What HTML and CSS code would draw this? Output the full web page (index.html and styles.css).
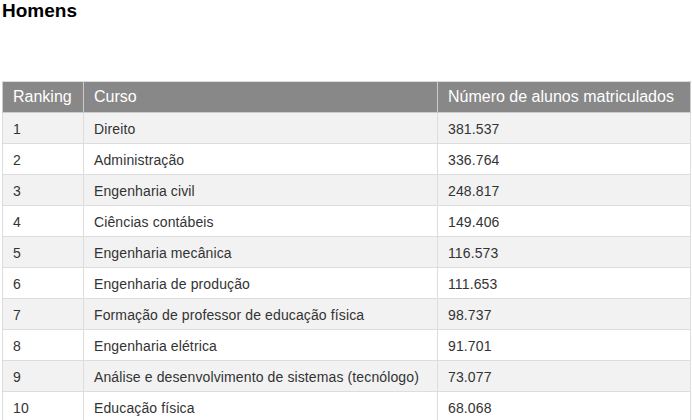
FILE: index.html
```html
<!DOCTYPE html>
<html lang="pt">
<head>
<meta charset="utf-8">
<link rel="stylesheet" href="styles.css">
</head>
<body>
<h2 class="title">Homens</h2>
<table class="rank">
  <colgroup><col class="c1"><col class="c2"><col class="c3"></colgroup>
  <thead>
    <tr><th>Ranking</th><th>Curso</th><th>Número de alunos matriculados</th></tr>
  </thead>
  <tbody>
    <tr><td>1</td><td>Direito</td><td>381.537</td></tr>
    <tr><td>2</td><td>Administração</td><td>336.764</td></tr>
    <tr><td>3</td><td>Engenharia civil</td><td>248.817</td></tr>
    <tr><td>4</td><td>Ciências contábeis</td><td>149.406</td></tr>
    <tr><td>5</td><td>Engenharia mecânica</td><td>116.573</td></tr>
    <tr><td>6</td><td>Engenharia de produção</td><td>111.653</td></tr>
    <tr><td>7</td><td>Formação de professor de educação física</td><td>98.737</td></tr>
    <tr><td>8</td><td>Engenharia elétrica</td><td>91.701</td></tr>
    <tr><td>9</td><td>Análise e desenvolvimento de sistemas (tecnólogo)</td><td>73.077</td></tr>
    <tr><td>10</td><td>Educação física</td><td>68.068</td></tr>
  </tbody>
</table>
</body>
</html>
```
FILE: styles.css
```css
html, body {
  margin: 0;
  padding: 0;
  background: #fff;
}
body {
  padding: 0 2px;
  font-family: "Liberation Sans", Arial, sans-serif;
  color: #333;
}
.title {
  margin: 0;
  font-size: 19px;
  line-height: 19px;
  font-weight: bold;
  color: #000;
  padding-top: 1px;
  height: 81px;
  box-sizing: border-box;
}
.rank {
  border-collapse: collapse;
  width: 688px;
  table-layout: fixed;
  border: 1px solid #ddd;
}
.c1 { width: 81px; }
.c2 { width: 354px; }
.c3 { width: 253px; }
.rank th {
  background: #888;
  color: #fff;
  font-weight: normal;
  font-size: 16px;
  line-height: 20px;
  text-align: left;
  padding: 5px 10px;
  border: 1px solid #ccc;
  border-top-color: #ddd;
}
.rank td {
  font-size: 14px;
  line-height: 20px;
  letter-spacing: 0.12px;
  padding: 6px 10px 4px;
  border: 1px solid #ddd;
  color: #333;
}
.rank tbody tr:nth-child(odd) td {
  background: #f2f2f2;
}
```
